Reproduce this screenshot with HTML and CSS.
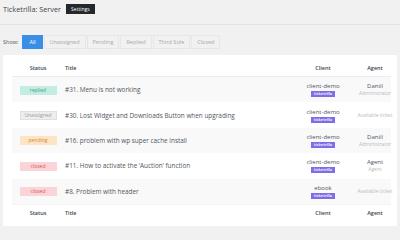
FILE: index.html
```html
<!DOCTYPE html>
<html>
<head>
<meta charset="utf-8">
<link rel="stylesheet" href="styles.css">
</head>
<body>
<div class="page">
  <header class="top">
    <h1 class="title">Ticketrilla: Server</h1>
    <span class="settings">Settings</span>
  </header>
  <nav class="filters">
    <span class="show">Show:</span>
    <span class="tab active">All</span>
    <span class="tab">Unassigned</span>
    <span class="tab">Pending</span>
    <span class="tab">Replied</span>
    <span class="tab">Third Side</span>
    <span class="tab">Closed</span>
  </nav>
  <section class="card">
    <div class="row head">
      <div class="c-status">Status</div>
      <div class="c-title">Title</div>
      <div class="c-client">Client</div>
      <div class="c-agent">Agent</div>
    </div>
    <div class="row odd">
      <div class="c-status"><span class="badge replied">replied</span></div>
      <div class="c-title">#31. Menu is not working</div>
      <div class="c-client"><span class="cname">client-demo</span><span class="tag">ticketrilla</span></div>
      <div class="c-agent"><span class="aname">Daniil</span><span class="arole">Administrator</span></div>
    </div>
    <div class="row">
      <div class="c-status"><span class="badge unassigned">Unassigned</span></div>
      <div class="c-title">#30. Lost Widget and Downloads Button when upgrading</div>
      <div class="c-client"><span class="cname">client-demo</span><span class="tag">ticketrilla</span></div>
      <div class="c-agent"><span class="avail">Available ticket</span></div>
    </div>
    <div class="row odd">
      <div class="c-status"><span class="badge pending">pending</span></div>
      <div class="c-title">#16. problem with wp super cache install</div>
      <div class="c-client"><span class="cname">client-demo</span><span class="tag">ticketrilla</span></div>
      <div class="c-agent"><span class="aname">Daniil</span><span class="arole">Administrator</span></div>
    </div>
    <div class="row">
      <div class="c-status"><span class="badge closed">closed</span></div>
      <div class="c-title">#11. How to activate the ‘Auction’ function</div>
      <div class="c-client"><span class="cname">client-demo</span><span class="tag">ticketrilla</span></div>
      <div class="c-agent"><span class="aname">Agent</span><span class="arole">Agent</span></div>
    </div>
    <div class="row odd">
      <div class="c-status"><span class="badge closed">closed</span></div>
      <div class="c-title">#8. Problem with header</div>
      <div class="c-client"><span class="cname">ebook</span><span class="tag">ticketrilla</span></div>
      <div class="c-agent"><span class="avail">Available ticket</span></div>
    </div>
    <div class="row head foot">
      <div class="c-status">Status</div>
      <div class="c-title">Title</div>
      <div class="c-client">Client</div>
      <div class="c-agent">Agent</div>
    </div>
  </section>
</div>
</body>
</html>
```
FILE: styles.css
```css
* { box-sizing: border-box; }
html, body { margin: 0; padding: 0; }
body {
  background: #f1f1f1;
  font-family: "Open Sans", "Noto Sans", sans-serif;
  color: #444;
  width: 400px;
  height: 240px;
  overflow: hidden;
}
.page { padding: 0 3px; }
.top {
  display: flex;
  align-items: center;
  gap: 5px;
  height: 25px;
  padding: 0 0 6px 3px;
  border-bottom: 1px solid #e3e3e3;
  margin: 0 -3px;
}
.title {
  margin: 0;
  font-size: 7.3px;
  font-weight: 400;
  color: #3c434a;
}
.settings {
  background: #23282d;
  color: #fff;
  font-size: 5px;
  height: 10px;
  line-height: 10px;
  padding: 0 5px;
}
.filters {
  display: flex;
  align-items: center;
  margin-top: 10px;
  height: 14px;
}
.show {
  font-size: 5.5px;
  color: #555;
  margin-right: 4px;
}
.tab {
  font-size: 5.5px;
  color: #a7aaad;
  height: 14px;
  line-height: 12px;
  padding: 0 5px;
  border: 1px solid #e6e6e6;
  margin-right: 1px;
}
.tab.active {
  background: #3a8ee6;
  border-color: #3a8ee6;
  color: #fff;
  padding: 0 6px;
}
.card {
  background: #fff;
  margin-top: 6px;
  padding: 4px 6px 4px 9px;
}
.row {
  display: grid;
  grid-template-columns: 52px 1fr 50px 43px;
  align-items: center;
  height: 25.4px;
  font-size: 6.4px;
  color: #50575e;
}
.row.odd { background: #f9f9f9; }
.row.head {
  height: 18px;
  font-weight: 600;
  color: #3c434a;
  font-size: 5.5px;
  border-bottom: 1px solid #ececec;
}
.row.foot { border-bottom: none; border-top: 1px solid #f3f3f3; }
.c-status { text-align: center; }
.c-title { padding-left: 1px; white-space: nowrap; }
.c-client, .c-agent {
  display: flex;
  flex-direction: column;
  align-items: center;
  white-space: nowrap;
}
.c-agent { padding-left: 11px; }
.badge {
  display: inline-block;
  width: 37px;
  height: 9px;
  line-height: 9px;
  font-size: 5px;
  text-align: center;
}
.badge.replied { background: #c3ece2; color: #3fa38a; }
.badge.unassigned { background: #eeeeee; color: #9a9a9a; border: 1px solid #e0e0e0; line-height: 7px; }
.badge.pending { background: #fde4c4; color: #d88a2c; }
.badge.closed { background: #fad4d8; color: #d9534f; }
.cname { font-size: 6px; color: #50575e; line-height: 8px; }
.tag {
  background: #7d6ee7;
  color: #fff;
  font-size: 4px;
  font-weight: 600;
  height: 6px;
  line-height: 6px;
  padding: 0 3px;
  margin-top: 1px;
}
.aname { font-size: 6px; color: #50575e; line-height: 8px; }
.arole { font-size: 5px; color: #bbb; line-height: 7px; }
.avail { font-size: 5px; color: #bbb; }
```
